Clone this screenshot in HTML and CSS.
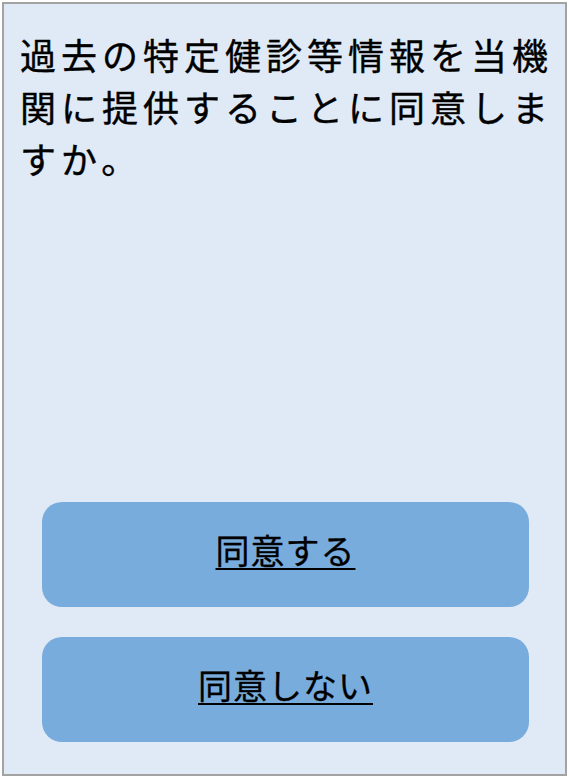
FILE: index.html
```html
<!DOCTYPE html>
<html lang="ja">
<head>
  <meta charset="UTF-8" />
  <title>同意確認</title>
  <link rel="stylesheet" href="styles.css">
</head>
<body>
  <!-- 同意確認画面 -->
  <div class="screen">
    <p class="question">過去の特定健診等情報を当機関に提供することに同意しますか。</p>

    <!-- 回答ボタン -->
    <div class="actions">
      <button class="answer" type="button"><span>同意する</span></button>
      <button class="answer" type="button"><span>同意しない</span></button>
    </div>
  </div>
</body>
</html>
```

FILE: styles.css
```css
/* 基本 */
html, body {
  margin: 0;
  padding: 0;
  height: 100%;
  background: #ffffff;
  font-family: "Noto Sans CJK JP", "Noto Sans", sans-serif;
  color: #000;
  box-sizing: border-box;
}
*, *::before, *::after {
  box-sizing: inherit;
}

/* 画面の枠 */
.screen {
  margin: 2px;
  height: calc(100% - 4px);
  border: 2px solid #a3a3a3;
  background: #dfeaf6;
  display: flex;
  flex-direction: column;
  padding: 24px 36px 32px 38px;
}

/* 質問文 */
.question {
  margin: 0 -32px 0 -22px;
  font-size: 36px;
  line-height: 52px;
  letter-spacing: 5px;
  -webkit-text-stroke: 0.4px #000;
}

/* ボタン */
.actions {
  margin-top: auto;
  display: flex;
  flex-direction: column;
  gap: 30px;
}
.answer {
  height: 105px;
  padding: 0 0 10px;
  border: none;
  border-radius: 20px;
  background: #78acdc;
  font-family: inherit;
  font-size: 34px;
  letter-spacing: 1px;
  color: #000;
  cursor: pointer;
}
.answer span {
  text-decoration: underline;
  text-underline-offset: 4px;
  text-decoration-thickness: 2px;
  -webkit-text-stroke: 0.3px #000;
}
```
